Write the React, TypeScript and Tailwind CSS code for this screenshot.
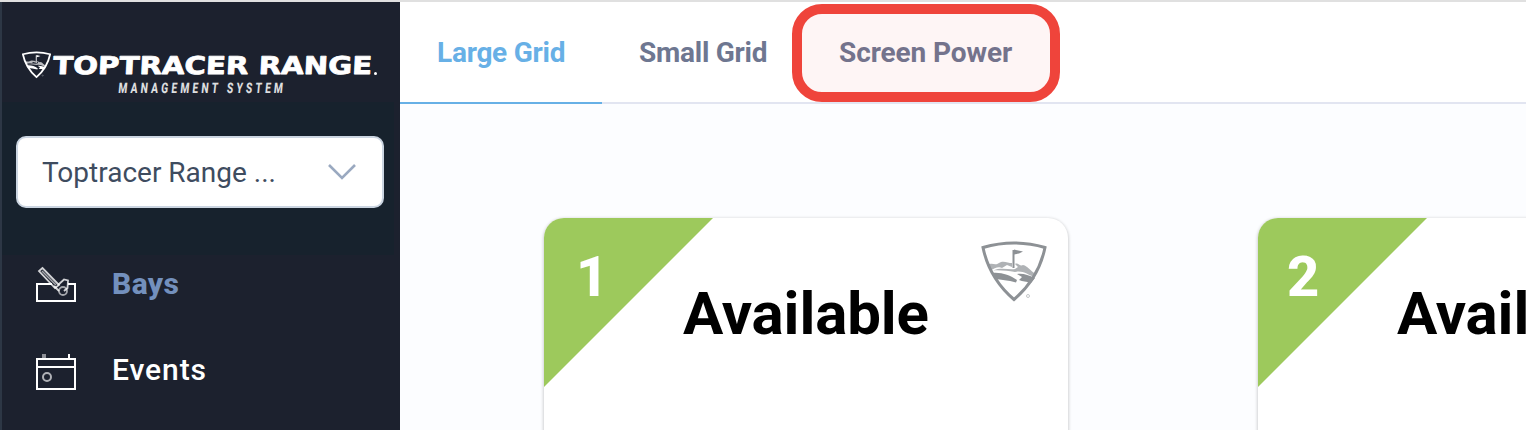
const tabs = [
  { label: "Large Grid", active: true, className: "w-[202px] tracking-[-0.25px]" },
  { label: "Small Grid", active: false, className: "w-[200px] tracking-[-0.25px]" },
  { label: "Screen Power", active: false, className: "w-[246px] tracking-[-0.1px]" },
];

const bays = [
  { id: 1, status: "Available", offset: "left-[32px]" },
  { id: 2, status: "Available", offset: "left-[29px]" },
];

function Shield({ className, strokeWidth = 3 }: { className: string; strokeWidth?: number }) {
  return (
    <svg viewBox="0 0 66 62" className={className} fill="none">
      <path
        d="M2 6.500 Q33 -2.500 64 6.500 C60 26 50 44 33 58.500 C16 44 6 26 2 6.500 Z"
        stroke="currentColor"
        strokeWidth={strokeWidth}
      />
      <path d="M32.500 27 V9" stroke="currentColor" strokeWidth="2" />
      <path d="M33 8.500 L42 10.500 L38 12.500 L33 13.500 Z" fill="currentColor" />
      <path
        d="M7 24 C11 21 14 25 18 22 C22 19 27 22 31 22 L31 26 L26 24 L21 27 C17 25 13 28 10 29 Z"
        fill="currentColor"
        opacity="0.7"
      />
      <path
        d="M34 23 C37 21 39 26 42 24 C47 25 49 30 55 33 L53 36 C46 33 41 29 34 31 C27 30 20 29 12 29.500 C20 26 28 29 34 28 L37 26 Z"
        fill="currentColor"
        opacity="0.7"
      />
      <path d="M11 32 C20 31 29 34 36 39 L35 41.500 C27 39 20 39 14 38 Z" fill="currentColor" />
      <path d="M36 33 C42 32 47 34 54 37 L50 42 C45 40 42 41 38 39 L41 36 Z" fill="currentColor" />
      <circle cx="47" cy="55" r="1.500" stroke="currentColor" strokeWidth="1" opacity="0.5" />
    </svg>
  );
}

function Logo() {
  return (
    <div className="relative h-[46px] w-[360px] text-white">
      <Shield className="absolute left-0 top-0 h-7 w-[29px]" strokeWidth={4} />
      <svg viewBox="0 0 360 46" className="h-[46px] w-[360px]" fill="currentColor">
        <text
          x="32"
          y="23.500"
          transform="skewX(-3)"
          fontFamily="DejaVu Sans, sans-serif"
          fontWeight="700"
          fontSize="24.500"
          stroke="currentColor"
          strokeWidth="0.8"
          strokeLinejoin="round"
          textLength="319"
          lengthAdjust="spacingAndGlyphs"
        >
          TOPTRACER RANGE
        </text>
        <circle cx="353.500" cy="22.500" r="1.500" />
        <text
          transform="matrix(0.7 0 -0.1 1 96 42)"
          fontFamily="Roboto, sans-serif"
          fontWeight="800"
          fontSize="14.500"
          opacity="0.85"
          textLength="235"
        >
          MANAGEMENT SYSTEM
        </text>
      </svg>
    </div>
  );
}

function BaysIcon() {
  return (
    <svg viewBox="0 0 44 40" className="h-10 w-11" fill="none" stroke="white" strokeWidth="2">
      <path d="M18 19 H3 V36 H41 V19 H34" />
      <path d="M8.500 3 L5 6 L21 23 L25 20 Z" strokeWidth="1.800" opacity="0.8" />
      <path d="M8 6 L22 20" strokeWidth="1.500" opacity="0.6" />
      <path d="M20 21 L25 26 M24 20 L30 14.500 L34 15.500 L33.500 23 L30 26" strokeWidth="1.800" opacity="0.8" />
      <circle cx="29" cy="26" r="4" strokeWidth="1.800" opacity="0.6" />
    </svg>
  );
}

function EventsIcon() {
  return (
    <svg viewBox="0 0 44 40" className="h-10 w-11" fill="none" stroke="white" strokeWidth="2">
      <path d="M3 8 H41 V38 H3 Z M3 16 H41 M35 3 V8" />
      <path d="M10 3 V7" strokeWidth="4" opacity="0.5" />
      <circle cx="13" cy="26" r="4" opacity="0.65" />
    </svg>
  );
}

function Sidebar() {
  return (
    <aside className="w-[400px] shrink-0 border-l-2 border-[#2d3745] bg-[#1c212e]">
      <div className="h-[100px] pl-5 pt-[49px]">
        <Logo />
      </div>
      <div className="h-[153px] w-[392px] bg-[#17222d] pl-3.5 pt-[34px]">
        <button className="flex h-[72px] w-[368px] items-center justify-between rounded-[10px] border-2 border-[#cbd5e1] bg-white pl-6 pr-[26px] text-[28px] text-[#3e4c5f]">
          <span className="pt-[2px]">Toptracer Range ...</span>
          <svg viewBox="0 0 28 18" className="h-[18px] w-7" fill="none" stroke="#9aa9c0" strokeWidth="2.6">
            <path d="M1 2 L14 15 L27 2" />
          </svg>
        </button>
      </div>
      <nav className="flex flex-col pl-8 text-[30px] text-white">
        <a className="flex h-[86px] items-start gap-[34px] pt-2.5">
          <BaysIcon />
          <span className="-mt-px font-extrabold leading-10 tracking-[0.4px] text-[#7390bd]">Bays</span>
        </a>
        <a className="flex h-[86px] items-start gap-[34px] pt-2.5">
          <EventsIcon />
          <span className="-mt-px font-medium leading-10 tracking-[0.9px]">Events</span>
        </a>
      </nav>
    </aside>
  );
}

function BayCard({ bay }: { bay: (typeof bays)[0] }) {
  return (
    <div className="relative h-[300px] w-[524px] shrink-0 overflow-hidden rounded-[20px] bg-white shadow-[0_1px_3px_1px_rgba(0,0,0,0.17)]">
      <div className="absolute left-0 top-0 size-[169px] bg-[#9dc95c] [clip-path:polygon(0_0,100%_0,0_100%)]" />
      <span className={`absolute top-[26px] text-[56px] font-extrabold leading-[66px] text-white ${bay.offset}`}>
        {bay.id}
      </span>
      <Shield className="absolute right-[21px] top-[23px] h-[62px] w-[66px] text-[#8d9195]" />
      <h2 className="pl-[139px] pt-[61px] text-[60px] font-bold leading-[70px] tracking-[-0.1px] text-black">
        {bay.status}
      </h2>
    </div>
  );
}

export default function App() {
  return (
    <div className="flex h-[430px] w-[1526px] overflow-hidden border-t-2 border-[#e0e0e0] bg-[#fcfdff] font-[Roboto,sans-serif]">
      <Sidebar />
      <main className="min-w-0 flex-1">
        <div className="relative flex h-[102px] border-b-2 border-[#e2e5f1] bg-white text-[28px] font-bold">
          {tabs.map((tab) => (
            <button
              key={tab.label}
              className={`flex h-[102px] shrink-0 items-center whitespace-nowrap border-b-2 pl-[37px] pt-[2px] ${tab.className} ${
                tab.active ? "border-[#67b0e6] text-[#67b0e6]" : "border-transparent text-[#6e7791]"
              }`}
            >
              {tab.label}
            </button>
          ))}
          <div className="absolute left-[392px] top-[2px] h-[98px] w-[268px] rounded-[30px] border-[10px] border-[#ef443b] bg-[#ef443b]/5" />
        </div>
        <div className="flex gap-[190px] pl-36 pt-[114px]">
          {bays.map((bay) => (
            <BayCard key={bay.id} bay={bay} />
          ))}
        </div>
      </main>
    </div>
  );
}
